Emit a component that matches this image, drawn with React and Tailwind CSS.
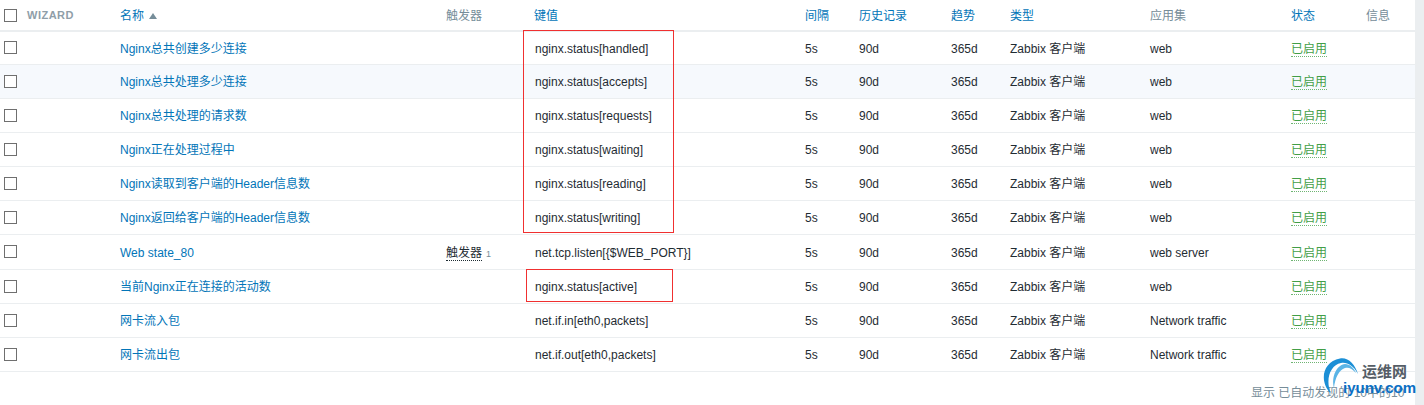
const font = { fontFamily: '"Liberation Sans", "Noto Sans CJK SC", sans-serif' };

const items = [
  { name: "Nginx总共创建多少连接", key: "nginx.status[handled]", app: "web", height: "h-[33px]" },
  { name: "Nginx总共处理多少连接", key: "nginx.status[accepts]", app: "web", hover: true },
  { name: "Nginx总共处理的请求数", key: "nginx.status[requests]", app: "web" },
  { name: "Nginx正在处理过程中", key: "nginx.status[waiting]", app: "web" },
  { name: "Nginx读取到客户端的Header信息数", key: "nginx.status[reading]", app: "web" },
  { name: "Nginx返回给客户端的Header信息数", key: "nginx.status[writing]", app: "web" },
  { name: "Web state_80", key: "net.tcp.listen[{$WEB_PORT}]", app: "web server", trigger: true, height: "h-[35px]" },
  { name: "当前Nginx正在连接的活动数", key: "nginx.status[active]", app: "web" },
  { name: "网卡流入包", key: "net.if.in[eth0,packets]", app: "Network traffic" },
  { name: "网卡流出包", key: "net.if.out[eth0,packets]", app: "Network traffic" },
];

const Checkbox = () => (
  <span className="block w-[13px] h-[13px] border border-[#6f6f6f] bg-white" />
);

const Watermark = () => (
  <div className="absolute left-[1320px] top-[356px] w-[104px] h-[49px]">
    <svg className="absolute left-0 top-0" width="44" height="42" viewBox="0 0 44 42">
      <path d="M11 38C-1 26 2 6 20 2.500C28 1 35 8 38 18C33 9 27 6 21 7C10 9 5 24 11 38Z" fill="#1b8fd6" />
      <path d="M14 32C11 20 17 9 25 8C30 8 34 12 36 17C32 12 28 11 25 12C19 14 15 22 14 32Z" fill="#5ab4e6" />
    </svg>
    <span className="absolute left-[42px] top-[8px] text-[15px] leading-[16px] font-bold text-[#555d66]">运维网</span>
    <span className="absolute left-[23px] top-[23px] text-[15px] leading-[17px] font-bold text-[#0a6fc4]">iyunv.com</span>
  </div>
);

export default function App() {
  return (
    <div className="relative w-[1424px] h-[405px] overflow-hidden bg-[#ebeef0] text-[12px] text-[#1f2c33]" style={font}>
      <div className="w-[1415px] h-full bg-white">
        <table className="w-full table-fixed border-collapse">
          <colgroup>
            <col className="w-[27px]" />
            <col className="w-[93px]" />
            <col className="w-[326px]" />
            <col className="w-[88px]" />
            <col className="w-[271px]" />
            <col className="w-[54px]" />
            <col className="w-[92px]" />
            <col className="w-[59px]" />
            <col className="w-[140px]" />
            <col className="w-[141px]" />
            <col className="w-[75px]" />
            <col className="w-[49px]" />
          </colgroup>
          <thead>
            <tr className="h-[31px] border-b-2 border-[#ebeef0] text-left">
              <th className="pl-1 font-normal"><Checkbox /></th>
              <th className="font-bold text-[11px] text-[#8f9ea8] tracking-[0.5px]">WIZARD</th>
              <th className="pt-[2px] font-normal text-[#0275b8]">
                名称 <span className="inline-block ml-0.5 align-[1px] w-0 h-0 border-x-[4px] border-x-transparent border-b-[6px] border-b-[#768d99]" />
              </th>
              <th className="pt-[2px] font-normal text-[#768d99]">触发器</th>
              <th className="pt-[2px] font-normal text-[#0275b8]">键值</th>
              <th className="pt-[2px] font-normal text-[#0275b8]">间隔</th>
              <th className="pt-[2px] font-normal text-[#0275b8]">历史记录</th>
              <th className="pt-[2px] font-normal text-[#0275b8]">趋势</th>
              <th className="pt-[2px] font-normal text-[#0275b8]">类型</th>
              <th className="pt-[2px] font-normal text-[#768d99]">应用集</th>
              <th className="pt-[2px] font-normal text-[#0275b8]">状态</th>
              <th className="pt-[2px] font-normal text-[#768d99]">信息</th>
            </tr>
          </thead>
          <tbody>
            {items.map((item) => (
              <tr
                key={item.name}
                className={`border-b border-[#ebeef0] ${item.height || "h-[34px]"} ${item.hover ? "bg-[#f6f9fd]" : ""}`}
              >
                <td className="pl-1"><Checkbox /></td>
                <td />
                <td className="pt-[2px] text-[#0275b8]">{item.name}</td>
                <td className="pt-[2px]">
                  {item.trigger && (
                    <>
                      <span className="border-b border-dotted border-[#1f2c33]">触发器</span>
                      <span className="ml-1 text-[9px] text-[#768d99]">1</span>
                    </>
                  )}
                </td>
                <td className="pt-[2px] pl-px">{item.key}</td>
                <td className="pt-[2px]">5s</td>
                <td className="pt-[2px]">90d</td>
                <td className="pt-[2px]">365d</td>
                <td className="pt-[2px]">Zabbix 客户端</td>
                <td className="pt-[2px]">{item.app}</td>
                <td className="pt-[2px]"><span className="text-[#429e47] border-b border-dotted border-[#6fb573]">已启用</span></td>
                <td />
              </tr>
            ))}
          </tbody>
        </table>
        <div className="pl-[1251px] pt-[12px] text-[#768d99]">显示 已自动发现的 10中的10</div>
      </div>

      {/* red highlight boxes drawn over the table */}
      <div className="absolute left-[523px] top-[30px] w-[151px] h-[203px] border border-[#f03030]" />
      <div className="absolute left-[526px] top-[269px] w-[147px] h-[33px] border border-[#f03030]" />

      <Watermark />
    </div>
  );
}
